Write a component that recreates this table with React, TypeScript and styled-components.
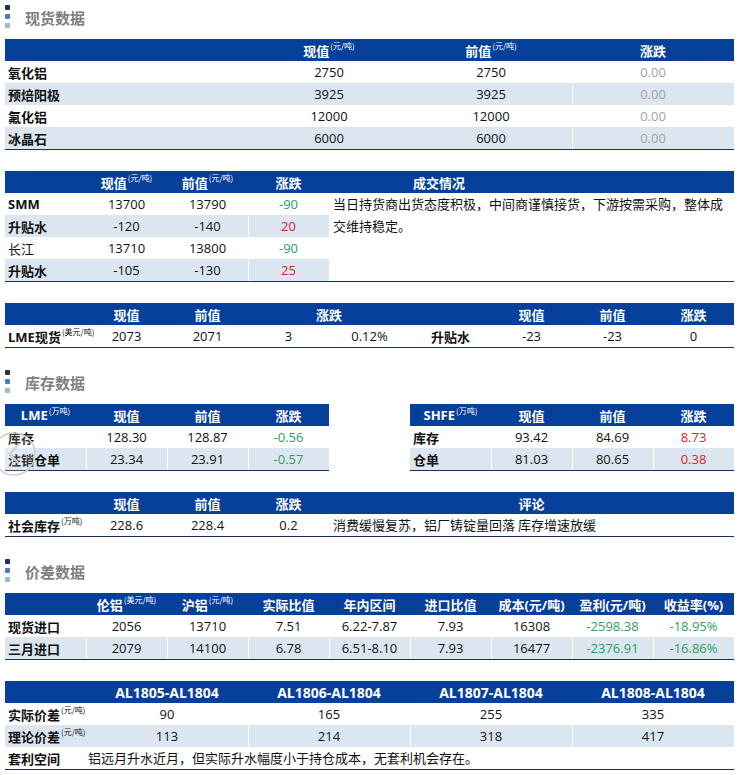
import React from "react";
import styled, { createGlobalStyle } from "styled-components";

const BLUE = "#07409A";
const SHADE = "#DCE6F1";
const GREEN = "#2E9E5B";
const RED = "#E2202B";
const GREY = "#A3A3A3";

type Tone = "up" | "down" | "flat";

const toneColor = (t?: Tone) =>
  t === "up" ? RED : t === "down" ? GREEN : t === "flat" ? GREY : "#111";

function App() {
  return (
    <StPage>
      <GlobalStyle />

      <StSection>
        <SectionTitle text="现货数据" />
        <StStack>
          <StTable $cols={9}>
            <StHead $span={3} />
            <StHead $span={2}>
              现值<StUnit>(元/吨)</StUnit>
            </StHead>
            <StHead $span={2}>
              前值<StUnit>(元/吨)</StUnit>
            </StHead>
            <StHead $span={2}>涨跌</StHead>
            {[
              ["氧化铝", "2750", "2750"],
              ["预焙阳极", "3925", "3925"],
              ["氟化铝", "12000", "12000"],
              ["冰晶石", "6000", "6000"],
            ].map(([name, now, prev], i) => (
              <React.Fragment key={name}>
                <StCell $span={3} $label $bold $shade={i % 2 === 1}>
                  {name}
                </StCell>
                <StCell $span={2} $shade={i % 2 === 1}>
                  {now}
                </StCell>
                <StCell $span={2} $shade={i % 2 === 1}>
                  {prev}
                </StCell>
                <StCell $span={2} $sep $tone="flat" $shade={i % 2 === 1}>
                  0.00
                </StCell>
              </React.Fragment>
            ))}
          </StTable>

          <StTable $cols={9}>
            <StHead />
            <StHead>
              现值<StUnit>(元/吨)</StUnit>
            </StHead>
            <StHead>
              前值<StUnit>(元/吨)</StUnit>
            </StHead>
            <StHead>涨跌</StHead>
            <StHead $span={5} $start $pad={84}>
              成交情况
            </StHead>
            <StCell $label $bold>SMM</StCell>
            <StCell>13700</StCell>
            <StCell>13790</StCell>
            <StCell $tone="down">-90</StCell>
            <StNote $span={5} $rows={4}>
              当日持货商出货态度积极，中间商谨慎接货，下游按需采购，整体成交维持稳定。
            </StNote>
            <StCell $label $bold $shade>升贴水</StCell>
            <StCell $shade>-120</StCell>
            <StCell $shade>-140</StCell>
            <StCell $shade $sep $tone="up">20</StCell>
            <StCell $label>长江</StCell>
            <StCell>13710</StCell>
            <StCell>13800</StCell>
            <StCell $tone="down">-90</StCell>
            <StCell $label $bold $shade>升贴水</StCell>
            <StCell $shade>-105</StCell>
            <StCell $shade>-130</StCell>
            <StCell $shade $sep $tone="up">25</StCell>
          </StTable>

          <StTable $cols={9}>
            <StHead />
            <StHead>现值</StHead>
            <StHead>前值</StHead>
            <StHead $span={2}>涨跌</StHead>
            <StHead />
            <StHead>现值</StHead>
            <StHead>前值</StHead>
            <StHead>涨跌</StHead>
            <StCell $label $bold>
              LME现货<StUnit>(美元/吨)</StUnit>
            </StCell>
            <StCell>2073</StCell>
            <StCell>2071</StCell>
            <StCell>3</StCell>
            <StCell>0.12%</StCell>
            <StCell $bold>升贴水</StCell>
            <StCell>-23</StCell>
            <StCell>-23</StCell>
            <StCell>0</StCell>
          </StTable>
        </StStack>
      </StSection>

      <StSection>
        <SectionTitle text="库存数据" />
        <StStack>
          <StPair>
            <StockTable
              market="LME"
              rows={[
                ["库存", "128.30", "128.87", "-0.56"],
                ["注销仓单", "23.34", "23.91", "-0.57"],
              ]}
            />
            <StockTable
              market="SHFE"
              rows={[
                ["库存", "93.42", "84.69", "8.73"],
                ["仓单", "81.03", "80.65", "0.38"],
              ]}
            />
          </StPair>

          <StTable $cols={9}>
            <StHead />
            <StHead>现值</StHead>
            <StHead>前值</StHead>
            <StHead>涨跌</StHead>
            <StHead $span={5}>评论</StHead>
            <StCell $label $bold>
              社会库存<StUnit>(万吨)</StUnit>
            </StCell>
            <StCell>228.6</StCell>
            <StCell>228.4</StCell>
            <StCell>0.2</StCell>
            <StNote $span={5}>消费缓慢复苏，铝厂铸锭量回落 库存增速放缓</StNote>
          </StTable>
        </StStack>
      </StSection>

      <StSection>
        <SectionTitle text="价差数据" />
        <StStack>
          <StTable $cols={9}>
            <StHead />
            <StHead>
              伦铝<StUnit>(美元/吨)</StUnit>
            </StHead>
            <StHead>
              沪铝<StUnit>(元/吨)</StUnit>
            </StHead>
            <StHead>实际比值</StHead>
            <StHead>年内区间</StHead>
            <StHead>进口比值</StHead>
            <StHead>成本(元/吨)</StHead>
            <StHead>盈利(元/吨)</StHead>
            <StHead>收益率(%)</StHead>
            {[
              ["现货进口", "2056", "13710", "7.51", "6.22-7.87", "7.93", "16308", "-2598.38", "-18.95%"],
              ["三月进口", "2079", "14100", "6.78", "6.51-8.10", "7.93", "16477", "-2376.91", "-16.86%"],
            ].map((row, i) => (
              <React.Fragment key={row[0]}>
                {row.map((v, j) => (
                  <StCell
                    key={j}
                    $label={j === 0}
                    $bold={j === 0}
                    $shade={i === 1}
                    $sep={j > 0}
                    $tone={j >= 7 ? "down" : undefined}
                  >
                    {v}
                  </StCell>
                ))}
              </React.Fragment>
            ))}
          </StTable>

          <StTable $cols={9}>
            <StHead />
            <StHead $span={2} $wide>AL1805-AL1804</StHead>
            <StHead $span={2} $wide>AL1806-AL1804</StHead>
            <StHead $span={2} $wide>AL1807-AL1804</StHead>
            <StHead $span={2} $wide>AL1808-AL1804</StHead>
            {[
              ["实际价差", "90", "165", "255", "335"],
              ["理论价差", "113", "214", "318", "417"],
            ].map((row, i) => (
              <React.Fragment key={row[0]}>
                <StCell $label $bold $shade={i === 1}>
                  {row[0]}
                  <StUnit>(元/吨)</StUnit>
                </StCell>
                {row.slice(1).map((v, j) => (
                  <StCell key={j} $span={2} $shade={i === 1} $sep={j > 0}>
                    {v}
                  </StCell>
                ))}
              </React.Fragment>
            ))}
            <StCell $label $bold>套利空间</StCell>
            <StNote $span={8} $pad={2}>
              铝远月升水近月，但实际升水幅度小于持仓成本，无套利机会存在。
            </StNote>
          </StTable>
        </StStack>
      </StSection>

      <StNavGhost>
        <svg width="46" height="50" viewBox="0 0 46 50">
          <circle cx="20" cy="25" r="21" fill="rgba(255,255,255,0.15)" stroke="#cfcfcf" strokeWidth="1.5" />
          <path d="M25 15 L16 25 L25 35" fill="none" stroke="#cfcfcf" strokeWidth="2" />
        </svg>
      </StNavGhost>
    </StPage>
  );
}

function SectionTitle({ text }: { text: string }) {
  return (
    <StTitleBar>
      <StMarks>
        <StMark $color="#1E2F52" />
        <StMark $color="#4A7BC9" />
        <StMark $color="#9CB9E2" />
      </StMarks>
      <StTitleText>{text}</StTitleText>
    </StTitleBar>
  );
}

function StockTable({ market, rows }: { market: string; rows: string[][] }) {
  return (
    <StTable $cols={4}>
      <StHead>
        {market}
        <StUnit>(万吨)</StUnit>
      </StHead>
      <StHead>现值</StHead>
      <StHead>前值</StHead>
      <StHead>涨跌</StHead>
      {rows.map(([name, now, prev, diff], i) => (
        <React.Fragment key={name}>
          <StCell $label $bold $shade={i === 1}>
            {name}
          </StCell>
          <StCell $shade={i === 1} $sep>
            {now}
          </StCell>
          <StCell $shade={i === 1} $sep>
            {prev}
          </StCell>
          <StCell $shade={i === 1} $sep $tone={diff.startsWith("-") ? "down" : "up"}>
            {diff}
          </StCell>
        </React.Fragment>
      ))}
    </StTable>
  );
}

export default App;

const GlobalStyle = createGlobalStyle`
  html, body {
    margin: 0;
    background: #fff;
  }
  body {
    font-family: "Open Sans", "Noto Sans CJK SC", "Microsoft YaHei", sans-serif;
    color: #111;
  }
`;

const StPage = styled.div`
  position: relative;
  width: 729px;
  padding: 5px 6px 0 5px;
  display: flex;
  flex-direction: column;
  gap: 22px;
`;

const StSection = styled.div`
  display: flex;
  flex-direction: column;
`;

const StStack = styled.div`
  display: flex;
  flex-direction: column;
  gap: 21px;
`;

const StPair = styled.div`
  display: flex;
  gap: 81px;
`;

const StTitleBar = styled.div`
  display: flex;
  align-items: center;
  gap: 15px;
  height: 23px;
  margin-bottom: 11px;
`;

const StMarks = styled.div`
  display: flex;
  flex-direction: column;
  gap: 4px;
`;

const StMark = styled.span<{ $color: string }>`
  display: block;
  width: 5px;
  height: 5px;
  border-radius: 1px;
  background: ${(p) => p.$color};
`;

const StTitleText = styled.span`
  font-family: "Noto Sans CJK SC", sans-serif;
  font-size: 15px;
  font-weight: 700;
  color: #808080;
  line-height: 23px;
  padding-top: 2px;
`;

const StTable = styled.div<{ $cols: number }>`
  display: grid;
  grid-template-columns: repeat(${(p) => p.$cols}, 81px);
  grid-auto-rows: 22px;
  border-bottom: 1px solid #1a3260;
  font-size: 13px;
`;

const StHead = styled.div<{ $span?: number; $start?: boolean; $pad?: number; $wide?: boolean }>`
  grid-column: span ${(p) => p.$span ?? 1};
  background: ${BLUE};
  color: #fff;
  font-weight: 700;
  font-size: ${(p) => (p.$wide ? 14 : 13)}px;
  display: flex;
  align-items: center;
  justify-content: ${(p) => (p.$start ? "flex-start" : "center")};
  padding-left: ${(p) => p.$pad ?? 0}px;
  white-space: nowrap;
`;

const StCell = styled.div<{
  $span?: number;
  $shade?: boolean;
  $sep?: boolean;
  $label?: boolean;
  $bold?: boolean;
  $tone?: Tone;
}>`
  grid-column: span ${(p) => p.$span ?? 1};
  display: flex;
  align-items: center;
  justify-content: ${(p) => (p.$label ? "flex-start" : "center")};
  padding-left: ${(p) => (p.$label ? 3 : 0)}px;
  background: ${(p) => (p.$shade ? SHADE : "#fff")};
  box-shadow: ${(p) => (p.$sep && p.$shade ? "inset 1px 0 0 #fff" : "none")};
  color: ${(p) => toneColor(p.$tone)};
  font-weight: ${(p) => (p.$bold ? 700 : 400)};
  white-space: nowrap;
  overflow: visible;
  z-index: ${(p) => (p.$label ? 1 : 0)};
`;

const StNote = styled.div<{ $span: number; $rows?: number; $pad?: number }>`
  grid-column: span ${(p) => p.$span};
  grid-row: span ${(p) => p.$rows ?? 1};
  padding-left: ${(p) => p.$pad ?? 4}px;
  line-height: 22px;
  font-family: "Noto Sans CJK SC", sans-serif;
  color: #111;
`;

const StUnit = styled.span`
  font-family: "Noto Sans CJK SC", sans-serif;
  font-size: 8px;
  font-weight: 400;
  line-height: 1;
  margin-left: 1px;
  margin-bottom: 8px;
`;

const StNavGhost = styled.div`
  position: absolute;
  left: -6px;
  top: 429px;
  z-index: 5;
  pointer-events: none;
`;
